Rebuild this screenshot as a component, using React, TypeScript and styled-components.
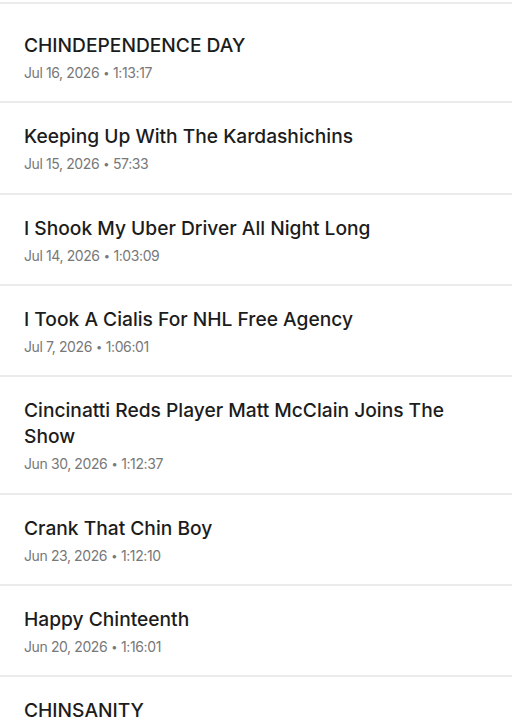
import React from 'react';
import styled, { createGlobalStyle } from 'styled-components';

const GlobalStyle = createGlobalStyle`
  html, body {
    margin: 0;
    padding: 0;
    background: #ffffff;
  }
  body {
    font-family: Inter, 'Noto Sans', 'Liberation Sans', sans-serif;
    -webkit-font-smoothing: antialiased;
  }
`;

const List = styled.ul`
  list-style: none;
  margin: 0;
  padding: 2px 0 0;
  width: 512px;
  height: 728px;
  overflow: hidden;
`;

const Row = styled.li<{ $first?: boolean }>`
  display: flex;
  flex-direction: column;
  padding: ${({ $first }) => ($first ? '28px' : '20px')} 24px 18.35px;
  border-top: 2px solid #ebebeb;
`;

const Title = styled.div`
  font-size: 19.2px;
  line-height: 26px;
  font-weight: 500;
  color: #1c1c1c;
  padding-right: 40px;
`;

const Meta = styled.div`
  margin-top: 5px;
  font-size: 14px;
  line-height: 20px;
  font-weight: 400;
  color: #787878;
  letter-spacing: -0.4px;
`;

const Dot = styled.span`
  margin: 0 4px;
  font-size: 11px;
  vertical-align: 1px;
`;

type Episode = { title: string; date: string; length: string };

const episodes: Episode[] = [
  { title: 'CHINDEPENDENCE DAY', date: 'Jul 16, 2026', length: '1:13:17' },
  { title: 'Keeping Up With The Kardashichins', date: 'Jul 15, 2026', length: '57:33' },
  { title: 'I Shook My Uber Driver All Night Long', date: 'Jul 14, 2026', length: '1:03:09' },
  { title: 'I Took A Cialis For NHL Free Agency', date: 'Jul 7, 2026', length: '1:06:01' },
  { title: 'Cincinatti Reds Player Matt McClain Joins The Show', date: 'Jun 30, 2026', length: '1:12:37' },
  { title: 'Crank That Chin Boy', date: 'Jun 23, 2026', length: '1:12:10' },
  { title: 'Happy Chinteenth', date: 'Jun 20, 2026', length: '1:16:01' },
  { title: 'CHINSANITY', date: 'Jun 16, 2026', length: '1:10:44' },
];

export default function App() {
  return (
    <>
      <GlobalStyle />
      <List>
        {episodes.map((ep, idx) => (
          <Row key={ep.title} $first={idx === 0}>
            <Title>{ep.title}</Title>
            <Meta>
              {ep.date}
              <Dot>•</Dot>
              {ep.length}
            </Meta>
          </Row>
        ))}
      </List>
    </>
  );
}
